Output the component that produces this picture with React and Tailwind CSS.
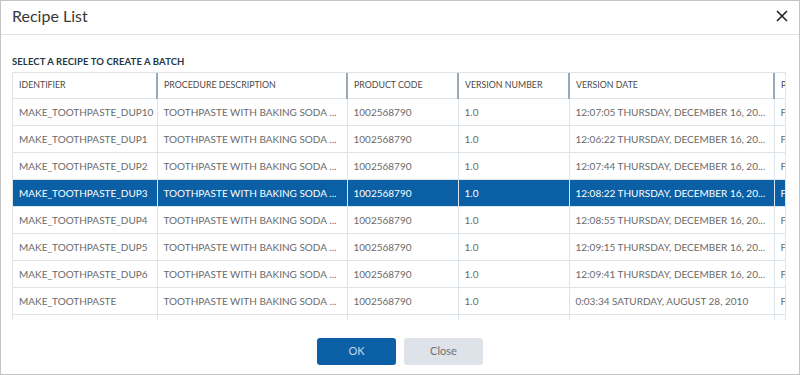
import React from 'react';

const rows = [
  ['MAKE_TOOTHPASTE_DUP10', '12:07:05 THURSDAY, DECEMBER 16, 20...'],
  ['MAKE_TOOTHPASTE_DUP1', '12:06:22 THURSDAY, DECEMBER 16, 20...'],
  ['MAKE_TOOTHPASTE_DUP2', '12:07:44 THURSDAY, DECEMBER 16, 20...'],
  ['MAKE_TOOTHPASTE_DUP3', '12:08:22 THURSDAY, DECEMBER 16, 20...'],
  ['MAKE_TOOTHPASTE_DUP4', '12:08:55 THURSDAY, DECEMBER 16, 20...'],
  ['MAKE_TOOTHPASTE_DUP5', '12:09:15 THURSDAY, DECEMBER 16, 20...'],
  ['MAKE_TOOTHPASTE_DUP6', '12:09:41 THURSDAY, DECEMBER 16, 20...'],
  ['MAKE_TOOTHPASTE', '0:03:34 SATURDAY, AUGUST 28, 2010'],
  ['MAKE_TOOTHPASTE_DUP7', '12:10:02 THURSDAY, DECEMBER 16, 20...'],
];

const cols = [
  { label: 'IDENTIFIER', w: 'w-[144px]' },
  { label: 'PROCEDURE DESCRIPTION', w: 'w-[190px]' },
  { label: 'PRODUCT CODE', w: 'w-[111px]' },
  { label: 'VERSION NUMBER', w: 'w-[111px]' },
  { label: 'VERSION DATE', w: 'w-[205px]' },
  { label: 'PRODUCT NAME', w: 'w-[140px]' },
];

export default function App() {
  return (
    <div className="w-[800px] h-[375px] bg-white border border-[#c4c4c4] flex flex-col overflow-hidden" style={{ fontFamily: 'Lato, "Open Sans", sans-serif' }}>
      <div className="h-[34px] shrink-0 flex items-center justify-between pl-[11px] pr-[10px] pb-[3px] border-b border-[#dce5ec]">
        <h1 className="text-[16px] text-[#3a3a3a] leading-none">Recipe List</h1>
        <svg width="14" height="14" viewBox="0 0 14 14" className="text-[#222]">
          <path d="M2 2L12 12M12 2L2 12" stroke="currentColor" strokeWidth="1.6" />
        </svg>
      </div>

      <div className="px-[11px] pt-[22px]">
        <p className="text-[9.5px] font-bold text-[#243746] tracking-[0.1px] leading-none">SELECT A RECIPE TO CREATE A BATCH</p>
        <div className="mt-[5px] w-[774px] h-[248px] overflow-hidden border-l border-r border-t border-[#dce5ec]">
          <table className="table-fixed border-collapse w-[901px]">
            <thead>
              <tr className="h-[26px]">
                {cols.map((c, i) => (
                  <th
                    key={c.label}
                    className={`${c.w} text-left font-normal text-[8.8px] text-[#4a4a4a] pl-[6px] pb-[2px] border-b border-[#dce5ec] whitespace-nowrap overflow-hidden ${i < cols.length - 1 ? 'border-r-2 border-r-[#9aa8b3]' : ''}`}
                  >
                    {c.label}
                  </th>
                ))}
              </tr>
            </thead>
            <tbody>
              {rows.map(([id, date]) => {
                const sel = id === 'MAKE_TOOTHPASTE_DUP3';
                const cell = `pl-[6px] text-[10px] whitespace-nowrap overflow-hidden border-b border-r border-[#dce5ec] ${sel ? 'text-white' : 'text-[#6a6a6a]'}`;
                return (
                  <tr key={id} className={`h-[27px] ${sel ? 'bg-[#0a5fa5]' : ''}`}>
                    <td className={cell}>{id}</td>
                    <td className={cell}>TOOTHPASTE WITH BAKING SODA ...</td>
                    <td className={cell}>1002568790</td>
                    <td className={cell}>1.0</td>
                    <td className={cell}>{date}</td>
                    <td className={cell}>FRESH TOOTHPASTE</td>
                  </tr>
                );
              })}
            </tbody>
          </table>
        </div>
      </div>

      <div className="flex justify-center gap-[8px] mt-[18px]">
        <button className="w-[79px] h-[27px] rounded-[3px] bg-[#0a5fa5] text-[#c6d8ea] text-[11px]">OK</button>
        <button className="w-[79px] h-[27px] rounded-[3px] bg-[#dde3e8] text-[#707070] text-[11px]">Close</button>
      </div>
    </div>
  );
}
